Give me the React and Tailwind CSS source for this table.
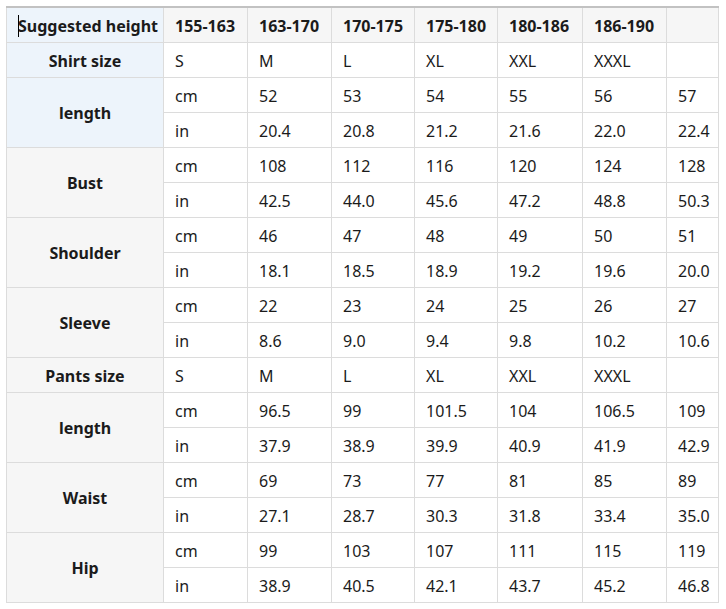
import React from "react";

const heights = ["155-163", "163-170", "170-175", "175-180", "180-186", "186-190", ""];

const groups = [
  { type: "size", label: "Shirt size", blue: true, values: ["S", "M", "L", "XL", "XXL", "XXXL", ""] },
  {
    type: "pair",
    label: "length",
    blue: true,
    cm: ["52", "53", "54", "55", "56", "57"],
    inch: ["20.4", "20.8", "21.2", "21.6", "22.0", "22.4"],
  },
  {
    type: "pair",
    label: "Bust",
    cm: ["108", "112", "116", "120", "124", "128"],
    inch: ["42.5", "44.0", "45.6", "47.2", "48.8", "50.3"],
  },
  {
    type: "pair",
    label: "Shoulder",
    cm: ["46", "47", "48", "49", "50", "51"],
    inch: ["18.1", "18.5", "18.9", "19.2", "19.6", "20.0"],
  },
  {
    type: "pair",
    label: "Sleeve",
    cm: ["22", "23", "24", "25", "26", "27"],
    inch: ["8.6", "9.0", "9.4", "9.8", "10.2", "10.6"],
  },
  { type: "size", label: "Pants size", values: ["S", "M", "L", "XL", "XXL", "XXXL", ""] },
  {
    type: "pair",
    label: "length",
    cm: ["96.5", "99", "101.5", "104", "106.5", "109"],
    inch: ["37.9", "38.9", "39.9", "40.9", "41.9", "42.9"],
  },
  {
    type: "pair",
    label: "Waist",
    cm: ["69", "73", "77", "81", "85", "89"],
    inch: ["27.1", "28.7", "30.3", "31.8", "33.4", "35.0"],
  },
  {
    type: "pair",
    label: "Hip",
    cm: ["99", "103", "107", "111", "115", "119"],
    inch: ["38.9", "40.5", "42.1", "43.7", "45.2", "46.8"],
  },
];

const cell = "border border-[#dcdcdc] h-[35px] px-[11px] pt-[2px] pb-0 text-left align-middle whitespace-nowrap";
const head = "border border-[#dcdcdc] h-[35px] px-[11px] pt-[2px] pb-0 text-center align-middle font-bold whitespace-nowrap";

export default function App() {
  return (
    <div className="w-[726px] h-[609px] bg-white pt-[6px] pl-[6px] text-[#1b1b1b] text-[16px]" style={{ fontFamily: "'Noto Sans', sans-serif" }}>
      <table className="table-fixed border-collapse w-[712px] border-t-2 border-t-[#c2c2c2]">
        <colgroup>
          <col className="w-[157px]" />
          <col className="w-[84px]" />
          <col className="w-[84px]" />
          <col className="w-[83px]" />
          <col className="w-[83px]" />
          <col className="w-[85px]" />
          <col className="w-[84px]" />
          <col className="w-[52px]" />
        </colgroup>
        <tbody>
          <tr className="bg-[#f6f6f6]">
            <td className={`${cell} font-bold bg-[#edf4fb] relative !pl-[11px] !pr-0`}>
              <span className="absolute left-[11px] top-[7px] w-px h-[22px] bg-black" />
              Suggested height
            </td>
            {heights.map((h, i) => (
              <td key={i} className={`${cell} font-bold`}>
                {h}
              </td>
            ))}
          </tr>
          {groups.map((g, gi) =>
            g.type === "size" ? (
              <tr key={gi}>
                <td className={`${head} ${g.blue ? "bg-[#edf4fb]" : "bg-[#f6f6f6]"}`}>{g.label}</td>
                {g.values.map((v, i) => (
                  <td key={i} className={cell}>
                    {v}
                  </td>
                ))}
              </tr>
            ) : (
              <React.Fragment key={gi}>
                <tr>
                  <td rowSpan={2} className={`${head} ${g.blue ? "bg-[#edf4fb]" : "bg-[#f6f6f6]"}`}>
                    {g.label}
                  </td>
                  <td className={cell}>cm</td>
                  {g.cm.map((v, i) => (
                    <td key={i} className={cell}>
                      {v}
                    </td>
                  ))}
                </tr>
                <tr>
                  <td className={cell}>in</td>
                  {g.inch.map((v, i) => (
                    <td key={i} className={cell}>
                      {v}
                    </td>
                  ))}
                </tr>
              </React.Fragment>
            )
          )}
        </tbody>
      </table>
    </div>
  );
}
